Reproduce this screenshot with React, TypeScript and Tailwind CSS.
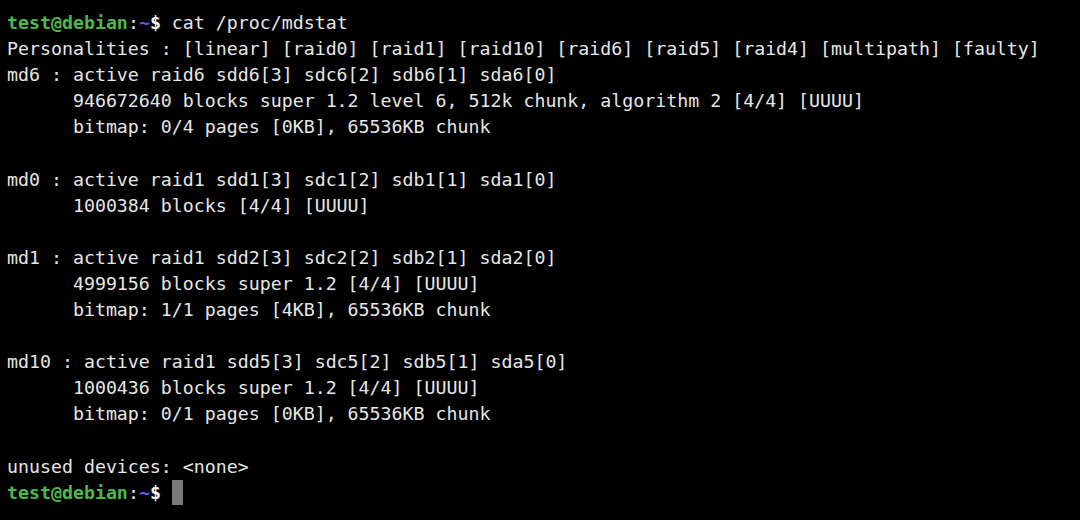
const lines = [
  'Personalities : [linear] [raid0] [raid1] [raid10] [raid6] [raid5] [raid4] [multipath] [faulty]',
  'md6 : active raid6 sdd6[3] sdc6[2] sdb6[1] sda6[0]',
  '      946672640 blocks super 1.2 level 6, 512k chunk, algorithm 2 [4/4] [UUUU]',
  '      bitmap: 0/4 pages [0KB], 65536KB chunk',
  '',
  'md0 : active raid1 sdd1[3] sdc1[2] sdb1[1] sda1[0]',
  '      1000384 blocks [4/4] [UUUU]',
  '',
  'md1 : active raid1 sdd2[3] sdc2[2] sdb2[1] sda2[0]',
  '      4999156 blocks super 1.2 [4/4] [UUUU]',
  '      bitmap: 1/1 pages [4KB], 65536KB chunk',
  '',
  'md10 : active raid1 sdd5[3] sdc5[2] sdb5[1] sda5[0]',
  '      1000436 blocks super 1.2 [4/4] [UUUU]',
  '      bitmap: 0/1 pages [0KB], 65536KB chunk',
  '',
  'unused devices: <none>',
]

function Prompt() {
  return (
    <>
      <span className="font-bold text-[#4cb94a]">test@debian</span>
      <span className="text-[#e8e8e8]">:</span>
      <span className="font-bold text-[#5c5cf0]">~</span>
      <span className="font-bold text-[#f2f2f2]">$</span>
    </>
  )
}

export default function App() {
  return (
    <div className="w-[1080px] h-[520px] bg-black overflow-hidden px-[7px] pt-[10px] font-['DejaVu_Sans_Mono',monospace] text-[18.25px] leading-[26.1px] text-[#e6e6e6] whitespace-pre">
      <div className="h-[26.1px]">
        <Prompt /> cat /proc/mdstat
      </div>
      {lines.map((l, i) => (
        <div key={i} className="h-[26.1px]">{l}</div>
      ))}
      <div className="flex items-center h-[26.1px]">
        <Prompt />
        <span> </span>
        <span className="inline-block w-[11px] h-[25px] bg-[#7a7a7a]" />
      </div>
    </div>
  )
}
